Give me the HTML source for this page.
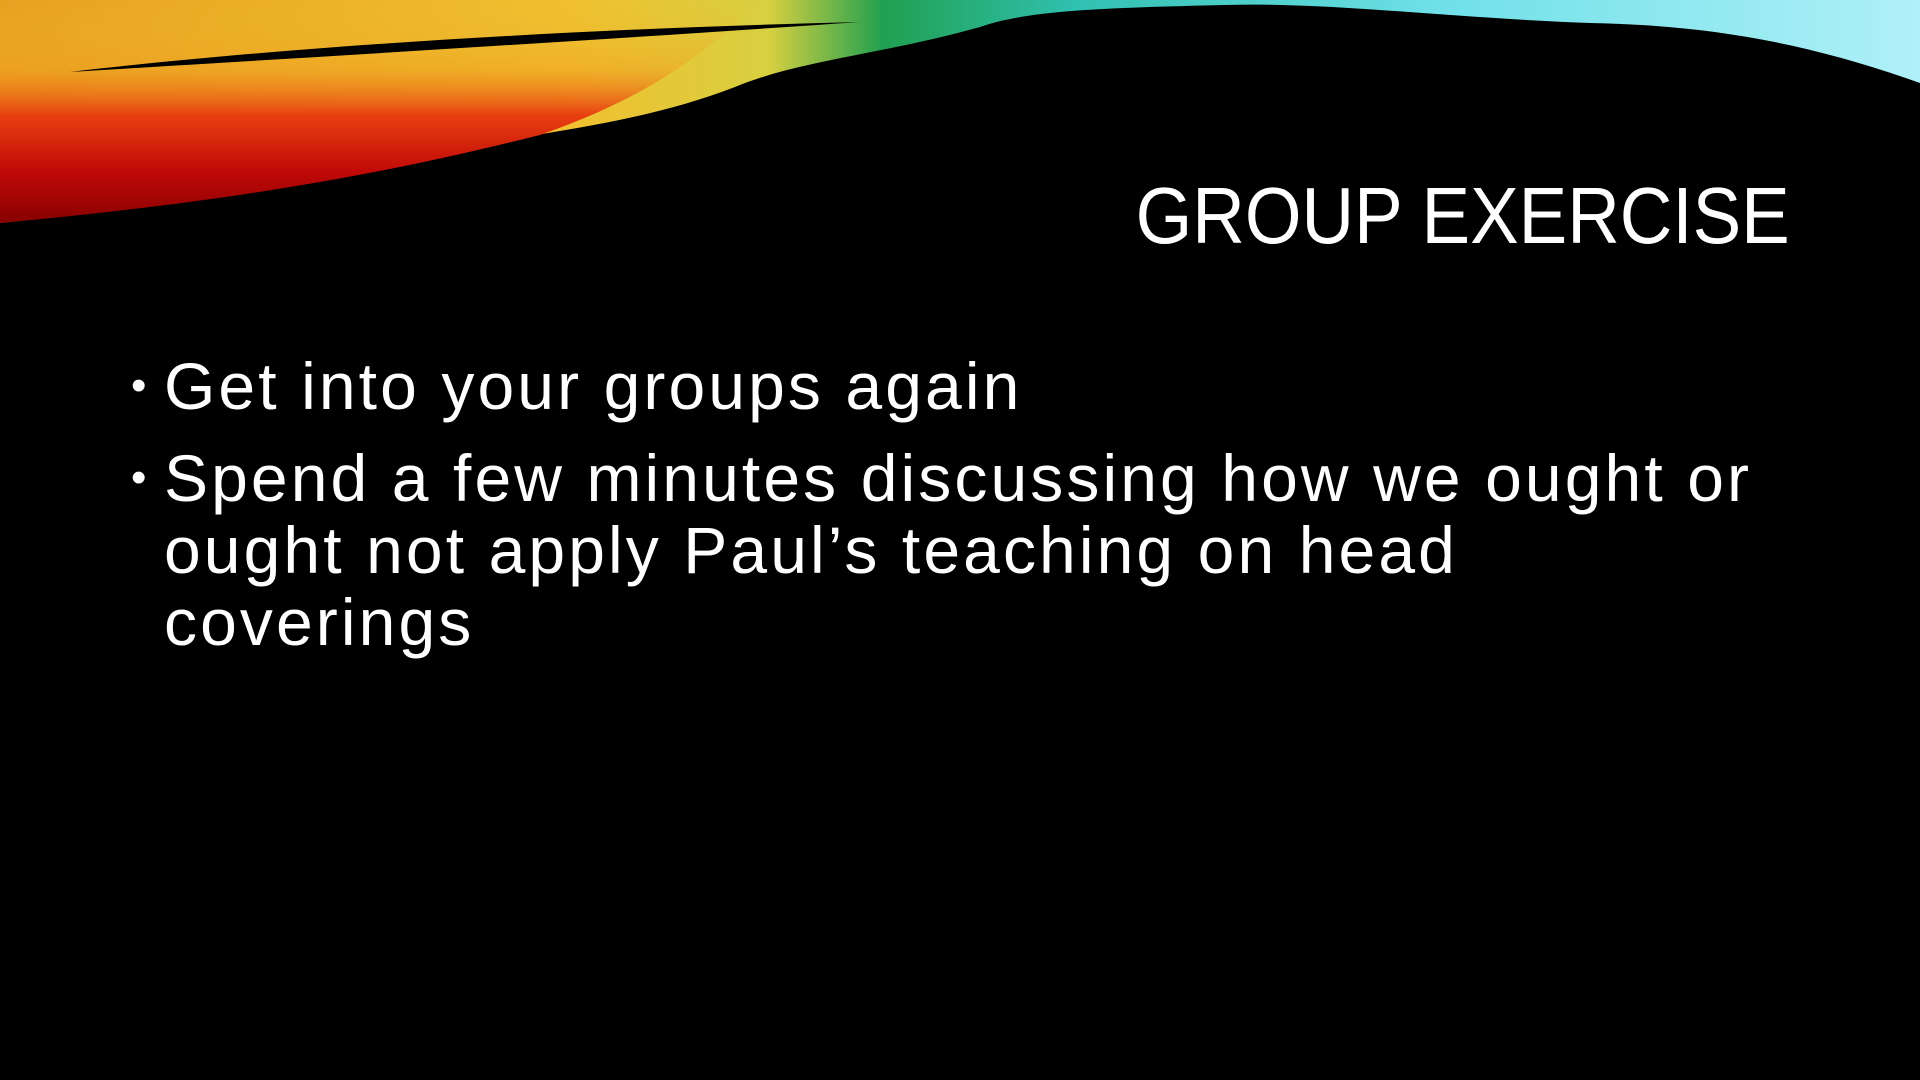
<!DOCTYPE html>
<html><head><meta charset="utf-8"><style>
html,body{margin:0;padding:0;background:#000;width:1920px;height:1080px;overflow:hidden}
.t{position:absolute;right:130px;top:176px;font-family:"Liberation Sans",sans-serif;color:#fff;font-size:80px;letter-spacing:0px;line-height:1;transform:scaleX(0.91);transform-origin:right;white-space:nowrap}
.b{position:absolute;left:131px;font-family:"Liberation Sans",sans-serif;color:#fff;font-size:66px;letter-spacing:3.1px;line-height:72px;white-space:nowrap}
.b span.d{position:absolute;left:0;font-size:44px}
.b .x{padding-left:33px}
</style></head><body>
<svg width="1920" height="1080" style="position:absolute;left:0;top:0">
<defs>
<linearGradient id="h" x1="0" y1="0" x2="1920" y2="0" gradientUnits="userSpaceOnUse">
<stop offset="0" stop-color="#e8a020"/><stop offset="0.3" stop-color="#f0c030"/><stop offset="0.4" stop-color="#d8d040"/><stop offset="0.46" stop-color="#20a050"/><stop offset="0.56" stop-color="#30c0b0"/><stop offset="0.75" stop-color="#70e0e8"/><stop offset="1" stop-color="#b0f0f8"/>
</linearGradient>
<linearGradient id="v" x1="0" y1="0" x2="0" y2="230" gradientUnits="userSpaceOnUse">
<stop offset="0" stop-color="#e8c030" stop-opacity="0"/><stop offset="0.3" stop-color="#f0a020" stop-opacity="0.5"/><stop offset="0.5" stop-color="#e84010"/><stop offset="0.75" stop-color="#c00808"/><stop offset="1" stop-color="#800000"/>
</linearGradient>
</defs>
<path d="M0,0 L1920,0 L1920,83 C1800,40 1700,25 1590,23 C1450,18 1330,2 1225,5 C1100,8 1030,10 980,27 C880,55 800,60 735,87 C650,120 560,130 490,143 C400,160 300,180 245,187 C150,205 80,215 0,223 Z" fill="url(#h)"/>
<path d="M0,0 L760,0 C700,60 640,100 540,135 C400,170 250,200 0,223 Z" fill="url(#v)"/>
<path d="M70,72 C300,45 600,28 860,22 C600,40 300,58 70,72 Z" fill="#000"/>
</svg>
<div class="t">GROUP EXERCISE</div>
<div class="b" style="top:350px"><span class="d">•</span><div class="x">Get into your groups again</div></div>
<div class="b" style="top:442px"><span class="d">•</span><div class="x">Spend a few minutes discussing how we ought or<br>ought not apply Paul’s teaching on head<br>coverings</div></div>
</body></html>
